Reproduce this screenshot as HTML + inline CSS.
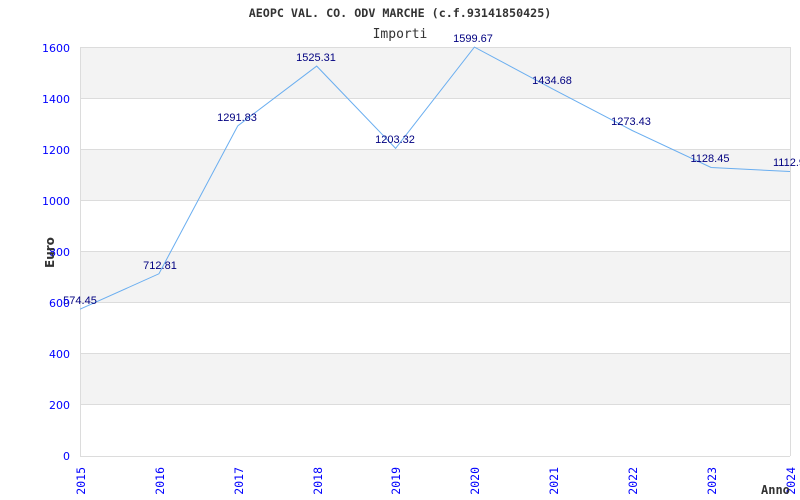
<!DOCTYPE html>
<html><head><meta charset="utf-8"><style>body{margin:0;background:#fff}svg{display:block}</style></head><body>
<svg width="800" height="500" xmlns="http://www.w3.org/2000/svg">
<rect width="800" height="500" fill="#fff"/>
<g fill="#f3f3f3">
<rect x="80" y="47" width="710" height="51.1"/>
<rect x="80" y="149.3" width="710" height="51.1"/>
<rect x="80" y="251.5" width="710" height="51.1"/>
<rect x="80" y="353.8" width="710" height="51.1"/>
</g>
<g stroke="#dcdcdc" stroke-width="1">
<line x1="80" y1="47.5" x2="790" y2="47.5"/>
<line x1="80" y1="98.5" x2="790" y2="98.5"/>
<line x1="80" y1="149.5" x2="790" y2="149.5"/>
<line x1="80" y1="200.5" x2="790" y2="200.5"/>
<line x1="80" y1="251.5" x2="790" y2="251.5"/>
<line x1="80" y1="302.5" x2="790" y2="302.5"/>
<line x1="80" y1="353.5" x2="790" y2="353.5"/>
<line x1="80" y1="404.5" x2="790" y2="404.5"/>
<line x1="80" y1="456.5" x2="790" y2="456.5"/>
<line x1="80.5" y1="47" x2="80.5" y2="456"/>
<line x1="790.5" y1="47" x2="790.5" y2="456"/>
</g>
<polyline fill="none" stroke="#6aaef0" stroke-width="1" points="80,309.2 158.9,273.8 237.8,125.8 316.7,66.1 395.6,148.4 474.4,47.1 553.3,89.3 632.2,130.5 711.1,167.5 790,171.5"/>
<g font-family="Liberation Sans, sans-serif" font-size="11" fill="#000080" text-anchor="middle">
<text x="80" y="304">574.45</text>
<text x="160" y="269">712.81</text>
<text x="237" y="121">1291.83</text>
<text x="316" y="61">1525.31</text>
<text x="395" y="143">1203.32</text>
<text x="473" y="42">1599.67</text>
<text x="552" y="84">1434.68</text>
<text x="631" y="125">1273.43</text>
<text x="710" y="162">1128.45</text>
<text x="789" y="166">1112.9</text>
</g>
<g font-family="DejaVu Sans, sans-serif" font-size="11" fill="#0000ff" text-anchor="end">
<text x="70" y="52">1600</text>
<text x="70" y="103">1400</text>
<text x="70" y="154">1200</text>
<text x="70" y="205">1000</text>
<text x="70" y="256">800</text>
<text x="70" y="307">600</text>
<text x="70" y="358">400</text>
<text x="70" y="409">200</text>
<text x="70" y="460">0</text>
</g>
<g font-family="DejaVu Sans Mono, monospace" font-size="11.5" fill="#0000ff" text-anchor="end">
<text transform="translate(85,467) rotate(-90)">2015</text>
<text transform="translate(164,467) rotate(-90)">2016</text>
<text transform="translate(243,467) rotate(-90)">2017</text>
<text transform="translate(322,467) rotate(-90)">2018</text>
<text transform="translate(400,467) rotate(-90)">2019</text>
<text transform="translate(479,467) rotate(-90)">2020</text>
<text transform="translate(558,467) rotate(-90)">2021</text>
<text transform="translate(637,467) rotate(-90)">2022</text>
<text transform="translate(716,467) rotate(-90)">2023</text>
<text transform="translate(795,467) rotate(-90)">2024</text>
</g>
<text x="400" y="17" font-family="DejaVu Sans Mono, monospace" font-size="11.7" font-weight="bold" fill="#333" text-anchor="middle">AEOPC VAL. CO. ODV MARCHE (c.f.93141850425)</text>
<text x="400" y="38" font-family="DejaVu Sans Mono, monospace" font-size="13" fill="#333" text-anchor="middle">Importi</text>
<text transform="translate(54,268) rotate(-90)" font-family="DejaVu Sans, sans-serif" font-size="12" font-weight="bold" fill="#333">Euro</text>
<text x="761" y="494" font-family="DejaVu Sans Mono, monospace" font-size="12" font-weight="bold" fill="#333">Anno</text>
</svg>
</body></html>
